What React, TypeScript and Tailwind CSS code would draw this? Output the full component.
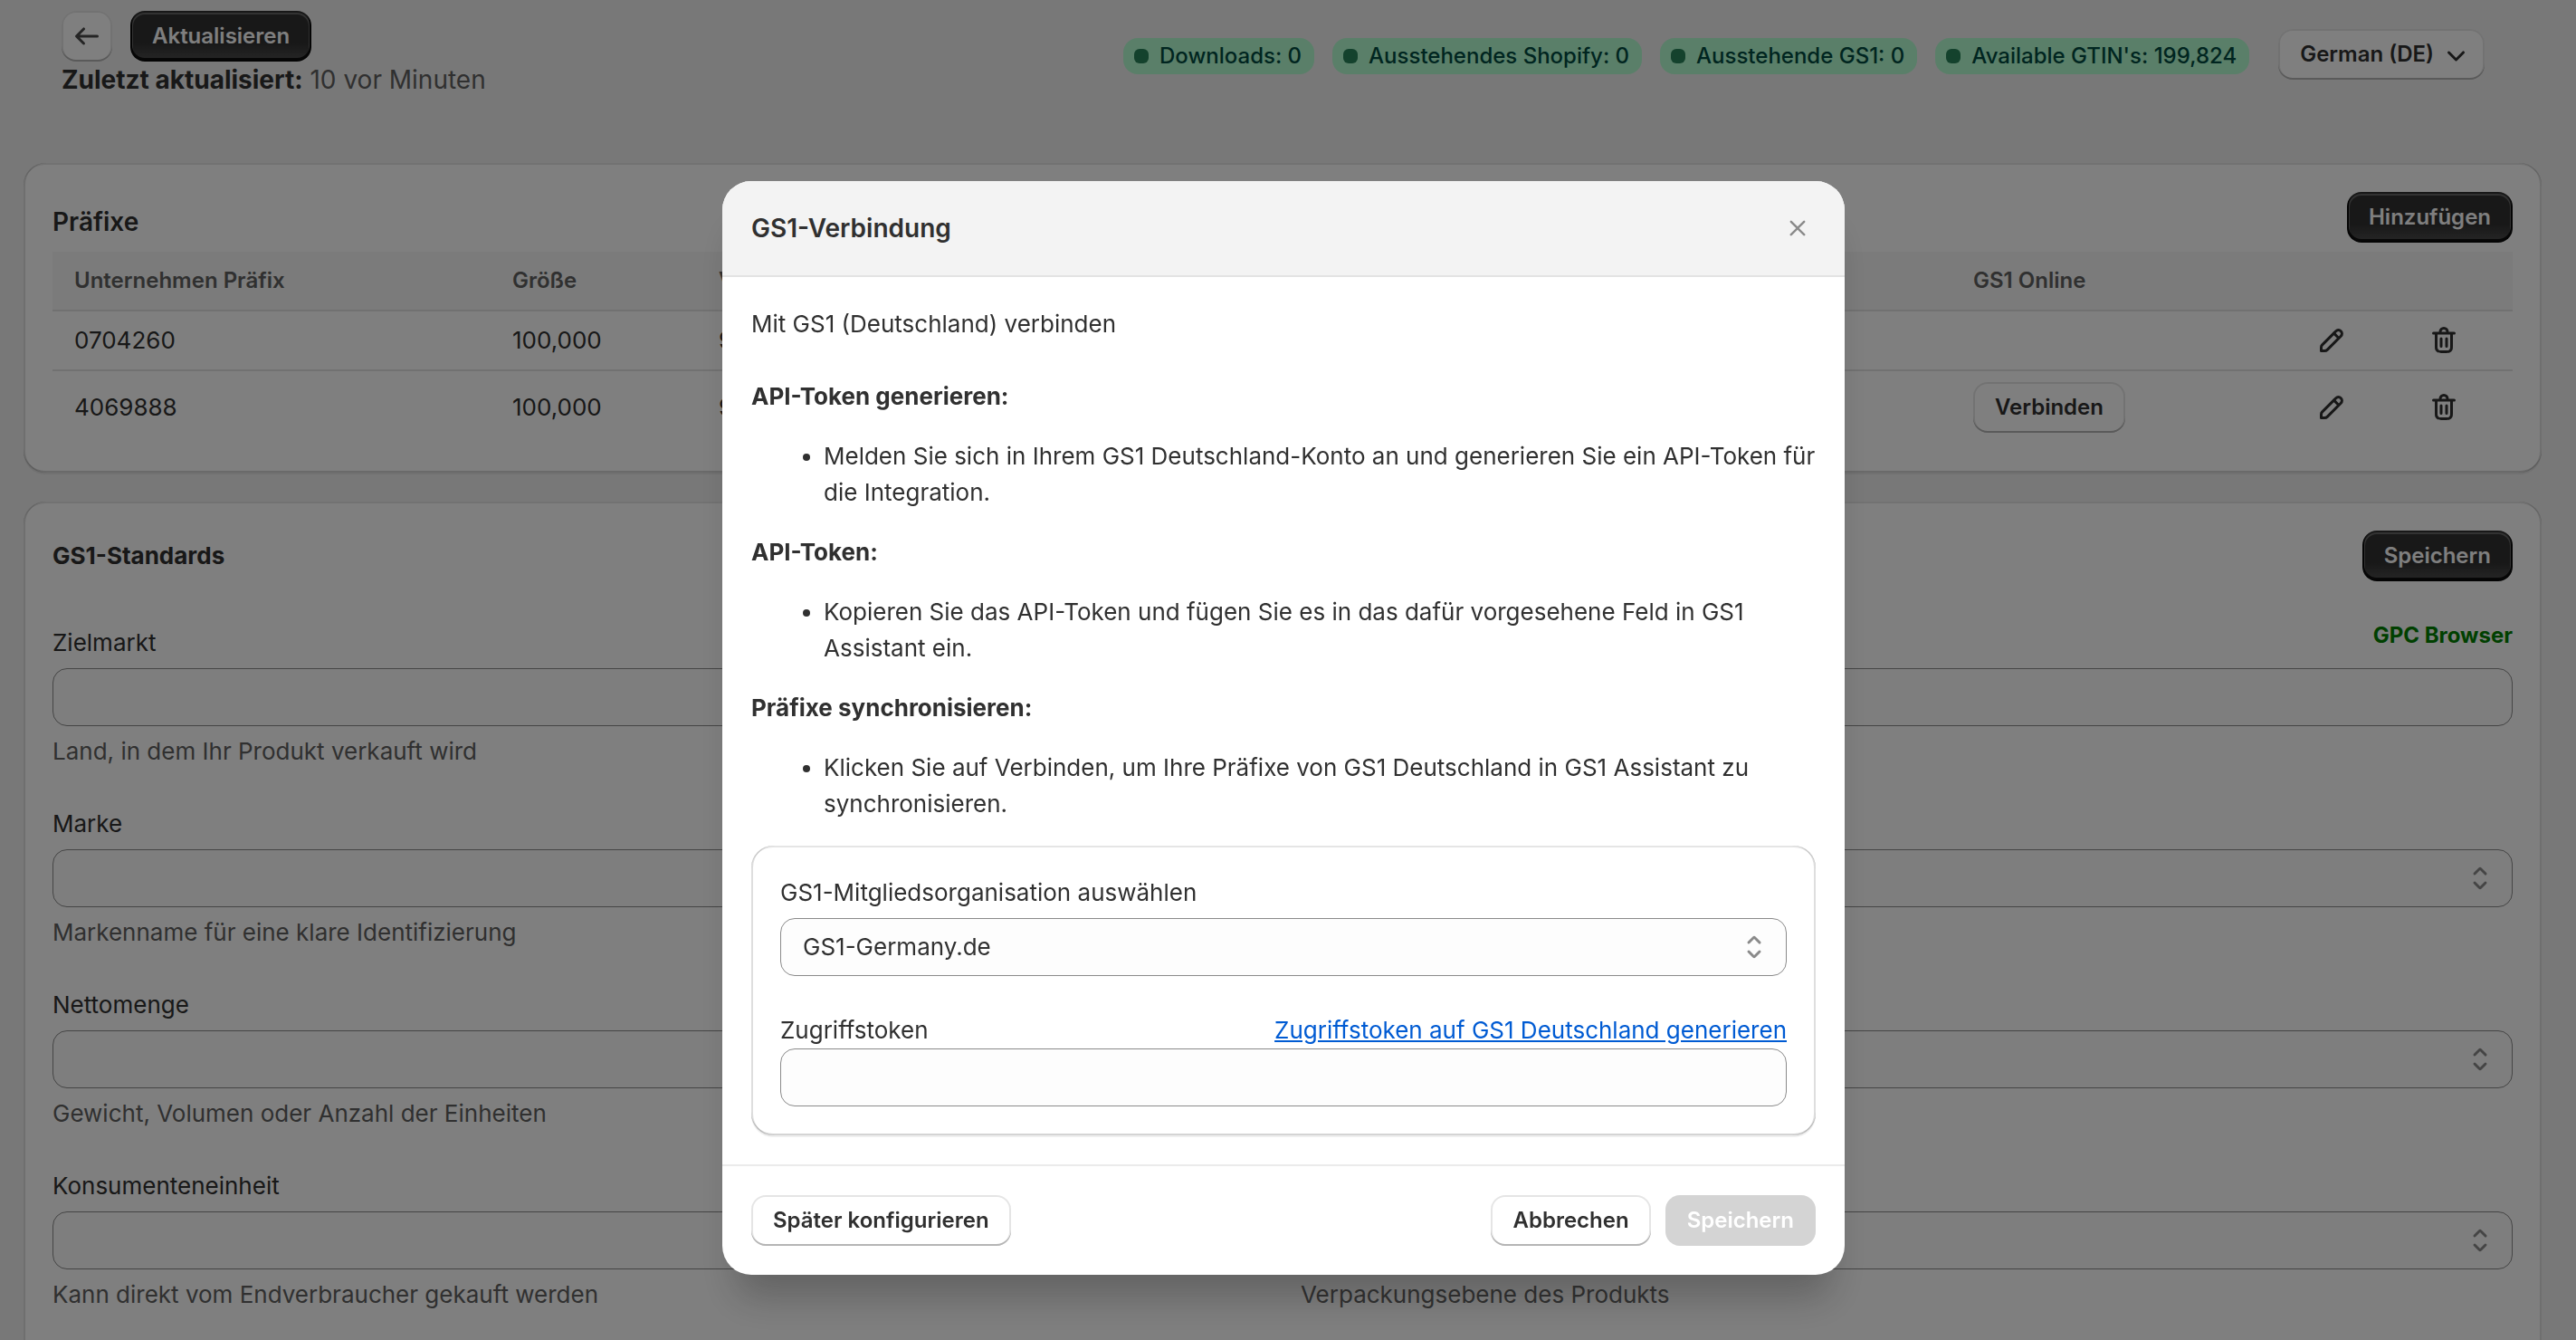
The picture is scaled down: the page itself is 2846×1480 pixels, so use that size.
import type { ReactNode } from 'react';

const ICONS = {
  arrowLeft:
    'M16.5 10a.75.75 0 0 1-.75.75h-9.69l2.72 2.72a.75.75 0 0 1-1.06 1.06l-4-4a.75.75 0 0 1 0-1.06l4-4a.75.75 0 1 1 1.06 1.06l-2.72 2.72h9.69a.75.75 0 0 1 .75.75Z',
  chevronDown:
    'M5.72 8.47a.75.75 0 0 1 1.06 0l3.47 3.47 3.47-3.47a.75.75 0 1 1 1.06 1.06l-4 4a.75.75 0 0 1-1.06 0l-4-4a.75.75 0 0 1 0-1.06Z',
  select:
    'M10.884 4.323a1.25 1.25 0 0 0-1.768 0l-2.646 2.647a.75.75 0 0 0 1.06 1.06l2.47-2.47 2.47 2.47a.75.75 0 1 0 1.06-1.06l-2.646-2.647ZM13.53 13.03l-2.646 2.647a1.25 1.25 0 0 1-1.768 0l-2.646-2.647a.75.75 0 0 1 1.06-1.06l2.47 2.47 2.47-2.47a.75.75 0 0 1 1.06 1.06Z',
  edit:
    'M15.655 4.344a2.695 2.695 0 0 0-3.81 0l-.599.599-.009-.009-1.06 1.06.008.01-5.88 5.88a2.75 2.75 0 0 0-.805 1.944v1.922a.75.75 0 0 0 .75.75h1.922a2.75 2.75 0 0 0 1.944-.806l7.54-7.539a2.695 2.695 0 0 0 0-3.81Zm-4.409 2.72-5.88 5.88a1.25 1.25 0 0 0-.366.884v1.172h1.172c.331 0 .65-.132.883-.366l5.88-5.88-1.689-1.69Zm2.75.629.599-.599a1.195 1.195 0 1 0-1.69-1.689l-.598.599 1.69 1.689Z',
  trash:
    'M11.5 8.25a.75.75 0 0 1 .75.75v4.25a.75.75 0 0 1-1.5 0v-4.25a.75.75 0 0 1 .75-.75ZM9.25 9a.75.75 0 0 0-1.5 0v4.25a.75.75 0 0 0 1.5 0v-4.25ZM7.25 5.25a2.75 2.75 0 0 1 5.5 0h3a.75.75 0 0 1 0 1.5h-.75v5.45c0 1.68 0 2.52-.327 3.162a3 3 0 0 1-1.311 1.311c-.642.327-1.482.327-3.162.327h-.4c-1.68 0-2.52 0-3.162-.327a3 3 0 0 1-1.311-1.311c-.327-.642-.327-1.482-.327-3.162v-5.45h-.75a.75.75 0 0 1 0-1.5h3Zm1.5 0a1.25 1.25 0 1 1 2.5 0h-2.5Zm-2.25 1.5h7v5.45c0 .865-.001 1.423-.036 1.848-.033.408-.09.559-.128.633a1.5 1.5 0 0 1-.655.655c-.074.038-.225.095-.633.128-.425.035-.983.036-1.848.036h-.4c-.865 0-1.423-.001-1.848-.036-.408-.033-.559-.09-.633-.128a1.5 1.5 0 0 1-.656-.655c-.037-.074-.094-.225-.127-.633-.035-.425-.036-.983-.036-1.848v-5.45Z',
  close:
    'M13.97 15.03a.75.75 0 1 0 1.06-1.06l-3.97-3.97 3.97-3.97a.75.75 0 0 0-1.06-1.06l-3.97 3.97-3.97-3.97a.75.75 0 0 0-1.06 1.06l3.97 3.97-3.97 3.97a.75.75 0 1 0 1.06 1.06l3.97-3.97 3.97 3.97Z',
};

function Icon({ name, className = 'size-10' }: { name: keyof typeof ICONS; className?: string }) {
  return (
    <svg viewBox="0 0 20 20" fill="currentColor" fillRule="evenodd" aria-hidden="true" className={className}>
      <path d={ICONS[name]} />
    </svg>
  );
}

const buttonBase =
  'flex h-14 shrink-0 items-center justify-center whitespace-nowrap rounded-2xl text-2xl leading-8 font-semibold';
const secondary =
  'bg-white text-[#303030] shadow-[inset_0_-2px_0_#b5b5b5,inset_0_0_0_2px_rgba(0,0,0,0.1),inset_0_1px_0_3px_#fff]';
const primary =
  'bg-[#303030] bg-linear-to-b from-transparent from-[63%] to-white/15 text-white shadow-[inset_0_-2px_0_2px_rgba(0,0,0,0.8),inset_0_0_0_2px_#303030,inset_0_1px_0_3px_rgba(255,255,255,0.25)]';
const disabledLook = 'bg-[#d4d4d4] text-white';

type ButtonProps = {
  children: ReactNode;
  variant?: 'primary' | 'secondary' | 'disabled';
};

function Button({ children, variant = 'secondary' }: ButtonProps) {
  const look = variant === 'primary' ? primary : variant === 'disabled' ? disabledLook : secondary;
  return (
    <button type="button" disabled={variant === 'disabled'} className={`${buttonBase} px-6 ${look}`}>
      {children}
    </button>
  );
}

function Card({ children }: { children: ReactNode }) {
  return (
    <section className="rounded-3xl bg-white p-8 shadow-[0_2px_0_rgba(26,26,26,0.07),inset_2px_0_0_rgba(0,0,0,0.13),inset_-2px_0_0_rgba(0,0,0,0.13),inset_0_-2px_0_rgba(0,0,0,0.17),inset_0_2px_0_rgba(0,0,0,0.1)]">
      {children}
    </section>
  );
}

function Badge({ children }: { children: ReactNode }) {
  return (
    <span className="flex h-10 items-center gap-3 rounded-2xl bg-[#b4fed2] pr-[14px] pl-3 text-2xl font-medium whitespace-nowrap text-[#014b40]">
      <span className="size-4 rounded-[6px] bg-[#29845a]" />
      {children}
    </span>
  );
}

const control =
  'h-16 w-full appearance-none rounded-2xl border border-[#8a8a8a] bg-[#fdfdfd] px-6 text-[26px] leading-10 text-[#303030]';

type SelectBoxProps = { id: string; options: string[]; name?: string };

function SelectBox({ id, options, name }: SelectBoxProps) {
  return (
    <div className="relative">
      <select id={id} aria-label={name} className={control}>
        {options.map((option) => (
          <option key={option}>{option}</option>
        ))}
      </select>
      <Icon name="select" className="pointer-events-none absolute top-3 right-4 size-10 text-[#8a8a8a]" />
    </div>
  );
}

type FieldData = { id: string; kind: 'text' | 'select'; label?: string; name?: string; help?: string };

const FIELDS: FieldData[] = [
  { id: 'market', label: 'Zielmarkt', help: 'Land, in dem Ihr Produkt verkauft wird', kind: 'select' },
  { id: 'category', name: 'Kategorie', kind: 'text' },
  { id: 'brand', label: 'Marke', help: 'Markenname für eine klare Identifizierung', kind: 'select' },
  { id: 'product', name: 'Produktname', kind: 'select' },
  { id: 'net', label: 'Nettomenge', help: 'Gewicht, Volumen oder Anzahl der Einheiten', kind: 'select' },
  { id: 'unit', name: 'Maßeinheit', kind: 'select' },
  {
    id: 'consumer',
    label: 'Konsumenteneinheit',
    help: 'Kann direkt vom Endverbraucher gekauft werden',
    kind: 'select',
  },
  { id: 'level', name: 'Verpackungsebene', help: 'Verpackungsebene des Produkts', kind: 'select' },
];

function Field({ id, label, name, help, kind }: FieldData) {
  return (
    <div className="flex flex-col gap-2">
      {label ? <label htmlFor={id}>{label}</label> : <div className="h-10" />}
      {kind === 'select' ? (
        <SelectBox id={id} name={name} options={['']} />
      ) : (
        <input id={id} type="text" aria-label={name} className={control} />
      )}
      {help && <p className="text-[#616161]">{help}</p>}
    </div>
  );
}

const PREFIXES = [
  { prefix: '0704260', size: '100,000', used: '98', connect: false },
  { prefix: '4069888', size: '100,000', used: '98', connect: true },
];

const cell = 'border-t-2 border-[#e3e3e3] px-6 py-3';

function PrefixTable() {
  return (
    <table className="w-full table-fixed border-separate border-spacing-0 text-left">
      <colgroup>
        <col className="w-[484px]" />
        <col className="w-[228px]" />
        <col />
        <col className="w-[376px]" />
        <col className="w-[124px]" />
        <col className="w-[120px]" />
      </colgroup>
      <thead className="bg-[#f7f7f7] text-2xl leading-10 text-[#616161]">
        <tr className="h-16">
          <th className="px-6 font-semibold">Unternehmen Präfix</th>
          <th className="px-6 font-semibold">Größe</th>
          <th className="px-6 font-semibold">Verwendet</th>
          <th className="px-6 font-semibold">GS1 Online</th>
          <th aria-label="Bearbeiten" />
          <th aria-label="Löschen" />
        </tr>
      </thead>
      <tbody>
        {PREFIXES.map((row) => (
          <tr key={row.prefix}>
            <td className={cell}>{row.prefix}</td>
            <td className={cell}>{row.size}</td>
            <td className={cell}>{row.used}</td>
            <td className={cell}>{row.connect && <Button>Verbinden</Button>}</td>
            <td className={cell}>
              <button type="button" aria-label="Bearbeiten" className="block">
                <Icon name="edit" />
              </button>
            </td>
            <td className={cell}>
              <button type="button" aria-label="Löschen" className="block">
                <Icon name="trash" />
              </button>
            </td>
          </tr>
        ))}
      </tbody>
    </table>
  );
}

const STEPS = [
  {
    title: 'API-Token generieren:',
    text: 'Melden Sie sich in Ihrem GS1 Deutschland-Konto an und generieren Sie ein API-Token für die Integration.',
  },
  {
    title: 'API-Token:',
    text: 'Kopieren Sie das API-Token und fügen Sie es in das dafür vorgesehene Feld in GS1 Assistant ein.',
  },
  {
    title: 'Präfixe synchronisieren:',
    text: 'Klicken Sie auf Verbinden, um Ihre Präfixe von GS1 Deutschland in GS1 Assistant zu synchronisieren.',
  },
];

function ConnectionDialog() {
  return (
    <div className="fixed inset-0 flex items-start justify-center bg-black/50 pt-50 pr-[10px]">
      <div
        role="dialog"
        aria-modal="true"
        aria-labelledby="dialog-title"
        className="w-full max-w-[1240px] overflow-hidden rounded-[32px] bg-white shadow-[0_40px_40px_-16px_rgba(26,26,26,0.28)]"
      >
        <header className="flex items-center justify-between border-b-2 border-[#e3e3e3] bg-[#f3f3f3] p-8">
          <h2 id="dialog-title" className="text-[28px] leading-10 font-semibold">
            GS1-Verbindung
          </h2>
          <button type="button" aria-label="Schließen" className="flex size-10 items-center justify-center text-[#8a8a8a]">
            <Icon name="close" className="size-8" />
          </button>
        </header>
        <div className="p-8">
          <p className="mb-10">Mit GS1 (Deutschland) verbinden</p>
          <div className="mb-[26px] flex flex-col gap-[26px]">
            {STEPS.map((step) => (
              <div key={step.title} className="flex flex-col gap-[26px]">
                <h3 className="font-bold">{step.title}</h3>
                <ul className="list-disc pl-20">
                  <li>{step.text}</li>
                </ul>
              </div>
            ))}
          </div>
          <Card>
            <div className="mb-10 flex flex-col gap-2">
              <label htmlFor="organisation">GS1-Mitgliedsorganisation auswählen</label>
              <SelectBox id="organisation" options={['GS1-Germany.de']} />
            </div>
            <div className="flex items-center justify-between">
              <label htmlFor="token">Zugriffstoken</label>
              <a href="#token" className="text-[#005bd3] underline">
                Zugriffstoken auf GS1 Deutschland generieren
              </a>
            </div>
            <input id="token" type="text" className={control} />
          </Card>
        </div>
        <footer className="flex items-center justify-between border-t-2 border-[#ebebeb] p-8">
          <Button>Später konfigurieren</Button>
          <div className="flex gap-4">
            <Button>Abbrechen</Button>
            <Button variant="disabled">Speichern</Button>
          </div>
        </footer>
      </div>
    </div>
  );
}

export default function App() {
  return (
    <div className="h-screen overflow-hidden bg-[#f1f1f1] pr-[38px] pl-[26px] font-['Inter',sans-serif] text-[26px] leading-10 text-[#303030]">
      <header className="mb-18 flex items-start justify-between pt-3 pr-[63px] pl-[42px]">
        <div>
          <div className="flex gap-5">
            <button type="button" aria-label="Zurück" className={`${buttonBase} w-14 ${secondary}`}>
              <Icon name="arrowLeft" className="size-10 text-[#4a4a4a]" />
            </button>
            <Button variant="primary">Aktualisieren</Button>
          </div>
          <p className="text-[28px] text-[#616161]">
            <strong className="font-bold text-[#303030]">Zuletzt aktualisiert:</strong> 10 vor Minuten
          </p>
        </div>
        <div className="flex items-end gap-8 pt-5">
          <div className="flex gap-5 pb-[6px]">
            <Badge>Downloads: 0</Badge>
            <Badge>Ausstehendes Shopify: 0</Badge>
            <Badge>Ausstehende GS1: 0</Badge>
            <Badge>Available GTIN's: 199,824</Badge>
          </div>
          <button type="button" className={`${buttonBase} gap-1 pr-3 pl-6 ${secondary}`}>
            German (DE)
            <Icon name="chevronDown" />
          </button>
        </div>
      </header>

      <main className="flex flex-col gap-8">
        <Card>
          <div className="flex h-[66px] items-start justify-between">
            <h2 className="self-center text-[28px] font-semibold">Präfixe</h2>
            <Button variant="primary">Hinzufügen</Button>
          </div>
          <PrefixTable />
        </Card>

        <Card>
          <div className="flex items-center justify-between">
            <h2 className="font-bold">GS1-Standards</h2>
            <Button variant="primary">Speichern</Button>
          </div>
          <div className="relative mt-12 grid grid-cols-2 gap-10 pb-10">
            {FIELDS.map((field) => (
              <Field key={field.id} {...field} />
            ))}
            <a href="#gpc" className="absolute -top-2 right-0 text-2xl leading-10 font-bold text-[#008000]">
              GPC Browser
            </a>
          </div>
        </Card>
      </main>

      <ConnectionDialog />
    </div>
  );
}
